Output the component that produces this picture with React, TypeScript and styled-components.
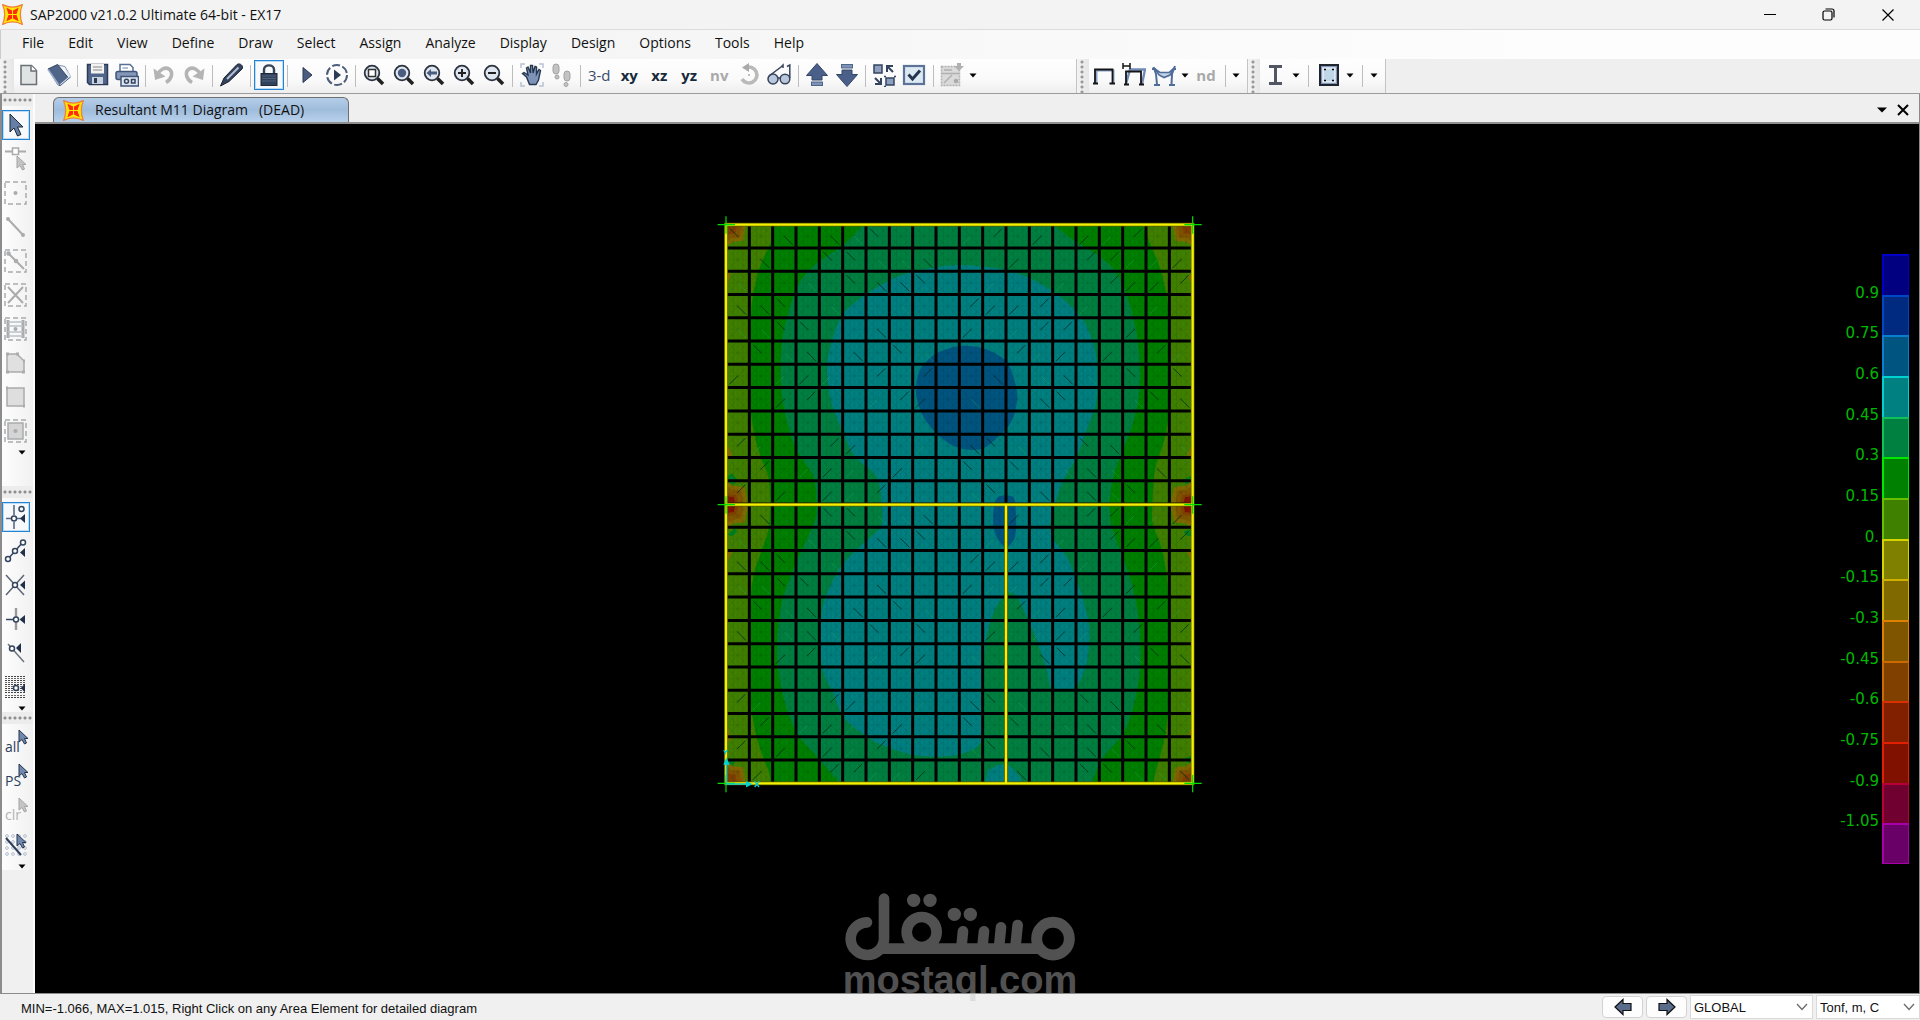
import React from "react";
import styled, { createGlobalStyle, css } from "styled-components";

const ui = '"Open Sans", "Noto Sans", sans-serif';
const arial = '"Liberation Sans", Arial, sans-serif';
const ink = "#33445f";
const line = "#9b9b9b";

const GlobalStyle = createGlobalStyle`
  *, *::before, *::after { box-sizing: border-box; }
  body { margin: 0; background: #f0f0f0; font-family: ${ui}; font-size: 14px; color: #111; }
  button, select { font: inherit; color: inherit; }
  svg { display: block; flex: none; }
`;

const Window = styled.div`
  position: relative;
  display: flex;
  flex-direction: column;
  height: 100vh;
  min-height: 900px;
  overflow: hidden;
`;

/* ---------- title bar ---------- */
const TitleBar = styled.header`
  display: flex;
  align-items: center;
  height: 30px;
  padding: 0 3px 0 2px;
  background: #f3f3f3;
  border-bottom: 1px solid #dcdcdc;
`;
const Title = styled.h1`
  flex: 1;
  margin: 0 0 0 7px;
  font-size: 14px;
  font-weight: 400;
  line-height: 20px;
`;
const WindowButton = styled.button`
  display: grid;
  place-items: center;
  width: 59px;
  height: 28px;
  padding: 0;
  border: 0;
  background: none;
`;

/* ---------- menu ---------- */
const MenuBar = styled.nav`
  display: flex;
  align-items: flex-start;
  height: 29px;
  padding-left: 9px;
  background: linear-gradient(90deg, #f0f0f0, #fdfdfd 80%);
  border-left: 1px solid #ccc;
`;
const MenuItem = styled.button`
  height: 26px;
  padding: 0 12px;
  border: 0;
  background: none;
  line-height: 24px;
`;

/* ---------- top tool bars ---------- */
const ToolRow = styled.div`
  display: flex;
  height: 35px;
  background: #efefef;
  border-bottom: 1px solid ${line};
`;
const Strip = styled.div<{ $w: number }>`
  display: flex;
  width: ${(p) => p.$w}px;
  padding-top: 1px;
  background: linear-gradient(#fefefe, #fafafa 60%, #eeeeee);
  border-right: 1px solid #c4c4c4;
`;
const Grip = styled.span<{ $w?: number }>`
  width: ${(p) => p.$w ?? 12}px;
  margin-top: -1px;
  background: radial-gradient(circle at 5px 3px, #9a9a9a 1px, transparent 2px) 0 0 / 14px 5px,
    linear-gradient(90deg, #f4f4f4, #e6e6e6);
`;
const Tools = styled.div<{ $w: number }>`
  display: flex;
  justify-content: space-between;
  width: ${(p) => p.$w}px;
`;
const Group = styled.div`
  display: flex;
`;
const Divider = styled.span`
  width: 1px;
  height: 22px;
  margin-top: 5px;
  background: #bdbdbd;
`;
const ToolButton = styled.button<{ $on?: boolean; $w?: number }>`
  display: grid;
  place-items: center;
  width: ${(p) => p.$w ?? 30}px;
  height: 30px;
  padding: 0;
  border: 0;
  background: none;
  ${(p) =>
    p.$on &&
    css`
      border: 1px solid #2483d3;
      outline: 1px solid #bcdcf5;
      outline-offset: -2px;
      background: #f7f9fb;
    `}
`;
const TextGlyph = styled.span<{ $tone?: "plain" | "off" | "strong" }>`
  font-size: 15px;
  line-height: 24px;
  font-weight: ${(p) => (p.$tone === "plain" ? 400 : 700)};
  color: ${(p) => (p.$tone === "off" ? "#a9a9a9" : p.$tone === "plain" ? "#3b4c6a" : "#172a3c")};
`;

/* ---------- body ---------- */
const Body = styled.div`
  display: flex;
  flex: 1;
  min-height: 0;
`;
const Side = styled.aside`
  width: 35px;
  border-left: 2px solid #8c8c8c;
  border-right: 2px solid #fcfcfc;
  background: #f0f0f0;
`;
const SideSection = styled.section<{ $h: number }>`
  display: flex;
  flex-direction: column;
  gap: 4px;
  height: ${(p) => p.$h}px;
  background: linear-gradient(90deg, #fdfdfd, #f1f1f1);
`;
const SideGrip = styled.span`
  height: 12px;
  background: radial-gradient(circle at 3px 6px, #8f8f8f 1px, transparent 2px) 0 0 / 5px 12px,
    #ececec;
`;
const SideArrow = styled.button`
  display: grid;
  place-items: center;
  align-self: flex-end;
  width: 22px;
  height: 4px;
  padding: 0;
  border: 0;
  background: none;
`;
const IconBox = styled.span`
  display: grid;
  place-items: center;
`;

const Main = styled.main`
  display: flex;
  flex: 1;
  flex-direction: column;
  min-width: 0;
  border-right: 1px solid #8a8a8a;
`;
const TabRow = styled.div`
  display: flex;
  align-items: flex-end;
  height: 30px;
  padding: 0 6px 0 18px;
  background: #efefef;
  border-bottom: 2px solid #8f8f8f;
`;
const Tab = styled.button`
  display: flex;
  align-items: center;
  gap: 11px;
  width: 296px;
  height: 25px;
  padding: 0 0 0 9px;
  border: 1px solid #6f6f6f;
  border-bottom: 0;
  border-radius: 6px 6px 0 0;
  background: linear-gradient(#b4cde8, #9fbcdc 50%, #b9d2ec);
  white-space: pre;
  line-height: 22px;
`;
const TabControls = styled.div`
  display: flex;
  margin-left: auto;
  height: 25px;
`;
const TabControl = styled.button`
  display: grid;
  place-items: center;
  width: 21px;
  padding: 0;
  border: 0;
  background: none;
`;
const Viewport = styled.div`
  position: relative;
  flex: 1;
  overflow: hidden;
  background: #000;
`;
/* the model floats freely in the drawing space */
const Model = styled.div`
  position: absolute;
  left: calc(50% - 263px);
  top: 88px;
`;
const Legend = styled.ul`
  position: absolute;
  right: 10px;
  top: 130px;
  display: grid;
  grid-auto-rows: 1fr;
  height: 610px;
  margin: 0;
  padding: 0;
  list-style: none;
`;
const LegendRow = styled.li`
  display: grid;
  grid-template-columns: 60px 27px;
  column-gap: 3px;
`;
const LegendLabel = styled.span`
  align-self: end;
  margin-bottom: -8px;
  text-align: right;
  font-family: "DejaVu Sans", sans-serif;
  font-size: 15px;
  line-height: 20px;
  color: #00b800;
`;
const Swatch = styled.span<{ $fill: string; $edge: string }>`
  background: ${(p) => p.$fill};
  border: solid ${(p) => p.$edge};
  border-width: 2px 1px 0 2px;
  li:last-child & { border-bottom-width: 1px; }
`;

/* ---------- status bar ---------- */
const StatusBar = styled.footer`
  display: flex;
  align-items: center;
  gap: 3px;
  height: 27px;
  padding-left: 21px;
  background: #f0f0f0;
  border-top: 1px solid #8c8c8c;
  font-family: ${arial};
  font-size: 13px;
`;
const Message = styled.span`
  flex: 1;
  padding-top: 3px;
`;
const StepButton = styled.button`
  display: grid;
  place-items: center;
  width: 41px;
  height: 22px;
  padding: 0;
  border: 1px solid #d2d2d2;
  border-radius: 4px;
  background: #fdfdfd;
`;
const Picker = styled.label<{ $w: number }>`
  display: grid;
  align-items: center;
  width: ${(p) => p.$w}px;
  height: 24px;
  border: 1px solid #d9d9d9;
  background: #fff;
  > * { grid-area: 1 / 1; }
  > svg { justify-self: end; margin-right: 4px; pointer-events: none; }
`;
const PickerSelect = styled.select`
  width: 100%;
  height: 22px;
  padding: 1px 18px 0 3px;
  border: 0;
  background: none;
  appearance: none;
`;
const Watermark = styled.div`
  position: absolute;
  left: 0;
  right: 0;
  bottom: 19px;
  display: flex;
  flex-direction: column;
  align-items: center;
  opacity: 0.42;
  color: #c1c1c1;
  pointer-events: none;
`;
const WatermarkText = styled.span`
  margin-top: -2px;
  font-family: ${arial};
  font-weight: 700;
  font-size: 38px;
  line-height: 42px;
`;

/* ---------- icons ---------- */
type SvgProps = { size?: number; children: React.ReactNode };
const Ico = ({ size = 24, children }: SvgProps) => (
  <svg width={size} height={size} viewBox="0 0 24 24" fill="none" stroke={ink} strokeWidth="1.5" aria-hidden="true">
    {children}
  </svg>
);

const Star = () => (
  <svg width="21" height="21" viewBox="0 0 20 20" aria-hidden="true">
    <path d="M0.600 0.600Q10 5.500 19.400 0.600Q15.500 10 19.400 19.400Q10 14.500 0.600 19.400Q4.500 10 0.600 0.600Z" fill="#ffe800" stroke="#f0803c" strokeWidth="1.200" />
    <path d="M5 4.500L9 6.500V9H6.500ZM15 4.500L11 6.500V9H13.500ZM5 15.500L9 13.500V11H6.500ZM15 15.500L11 13.500V11H13.500Z" fill="#ff2a10" stroke="#ff2a10" strokeWidth="1" />
  </svg>
);
const Caret = () => (
  <svg width="8" height="5" viewBox="0 0 8 5" aria-hidden="true">
    <path d="M0.500 0.500H7.500L4 4.500Z" fill="#000" />
  </svg>
);
const Chevron = () => (
  <svg width="12" height="8" viewBox="0 0 12 8" fill="none" stroke="#6b6b6b" strokeWidth="1.3" aria-hidden="true">
    <path d="M1 1L6 6.500L11 1" />
  </svg>
);
const Pointer = ({ x = 0, y = 0, off = false }: { x?: number; y?: number; off?: boolean }) => (
  <path
    transform={`translate(${x} ${y})`}
    d="M0 0V12L3 9.500L5.500 14L7.500 13L5.500 8.500H9Z"
    fill={off ? "#c4c4c4" : "#7088ad"}
    stroke={off ? "#a5a5a5" : "#26354d"}
    strokeWidth="1"
  />
);

const Lens = ({ children }: { children: React.ReactNode }) => (
  <Ico>
    <circle cx="10" cy="10" r="7.3" fill="#dfe6ef" stroke="#2b3340" strokeWidth="1.8" />
    <path d="M15.500 15.500L21 21" stroke="#222" strokeWidth="3.6" />
    {children}
  </Ico>
);

const off = "#a9abad";
const icons: Record<string, React.ReactNode> = {
  New: <Ico><path d="M4 2.500H14.500L19.500 7.500V21.500H4Z" fill="#dfe3e3" stroke="#6a6f75" /><path d="M14 2.500V8H19.500" stroke="#6a6f75" fill="#fff" /></Ico>,
  Open: <Ico><path d="M10.500 2L18 3.500L23.500 13.500L13.500 22Z" fill="#f1f4f8" stroke="#8796ae" strokeWidth="1" /><path d="M1 6L10.500 1.500L21 14.500L13 22.500L11 22Z" fill="#50658a" stroke="#34445f" strokeWidth="1" /><path d="M1 6.500L12 22.500" stroke="#a3b4cd" /><path d="M13.500 22L23 14L20 9" stroke="#dfe6ef" strokeWidth="2" /><path d="M13 22.800L23.500 14" stroke="#50658a" strokeWidth="1" /></Ico>,
  Save: <Ico><path d="M2.500 1.500H22.500V21.500H4.500L2.500 19.500Z" fill="#4f658a" stroke="#2c3b55" /><rect x="6" y="1" width="13" height="9.500" fill="#f2f2f2" stroke="none" /><path d="M8 4H17M8 7H17" stroke="#888" strokeWidth="1" /><rect x="7" y="14" width="11" height="7" fill="#c9d3e0" stroke="none" /><rect x="9" y="15" width="3" height="5" fill="#2c3b55" stroke="none" /></Ico>,
  Print: <Ico><path d="M5 9V1.500H15L18 4.500V9" fill="#fff" stroke="#5a6f92" /><path d="M7.500 5H13" stroke="#9aa9c0" /><rect x="1" y="8.500" width="21" height="8" rx="2" fill="#8497b8" stroke="#41557a" /><rect x="6" y="13.500" width="17.500" height="9.500" fill="#dfe6ef" stroke="#41557a" /><circle cx="11.500" cy="18.300" r="2" /><rect x="16.500" y="16.500" width="3.500" height="3.500" /></Ico>,
  Undo: <Ico><path d="M5 12C8 6.500 13 3.500 17 6C21.500 9 20 16 14 19.500" stroke="#b4b4b4" strokeWidth="3.600" /><path d="M1.500 5.500L3 17L13.500 13.500Z" fill="#b4b4b4" stroke="none" /></Ico>,
  Redo: <Ico><path d="M19 12C16 6.500 11 3.500 7 6C2.500 9 4 16 10 19.500" stroke="#b4b4b4" strokeWidth="3.600" /><path d="M22.500 5.500L21 17L10.500 13.500Z" fill="#b4b4b4" stroke="none" /></Ico>,
  Pen: <Ico><path d="M0.500 23L4 15L17 1.500C20 -0.500 24 3 22 6L9 18.500Z" fill="#34435e" stroke="#181f2b" strokeWidth="1" /><path d="M7 16L18.500 4.500" stroke="#b4c0d4" strokeWidth="2" /></Ico>,
  Lock: <Ico><path d="M7 11V6.500C7 1 17 1 17 6.500V11" stroke="#36435a" strokeWidth="2.400" /><rect x="4" y="10.500" width="16" height="12" fill="#33425c" stroke="#1e293b" strokeWidth="1" /><path d="M5 13H19M5 15.500H19M5 18H19" stroke="#50627f" strokeWidth="1" /></Ico>,
  Run: <Ico><path d="M8 4.500L17 12L8 19.500Z" fill="#4a5d80" stroke="#2b3a55" strokeWidth="1" /></Ico>,
  "Run cases": <Ico><circle cx="12" cy="12" r="10" strokeDasharray="8 2.470" stroke="#4d5d78" strokeWidth="2" /><path d="M9 6.500L16 12L9 17.500Z" fill="#2d3c56" stroke="none" /></Ico>,
  "Zoom window": <Lens><rect x="6.500" y="6.500" width="7" height="7" stroke="#333" fill="#fff" /></Lens>,
  "Zoom full": <Lens><circle cx="10" cy="10" r="4.200" fill="#4a5d80" stroke="none" /></Lens>,
  "Zoom back": <Lens><path d="M4.500 10L9 6V8.500H15V11.500H9V14Z" fill="#4a5d80" stroke="none" /></Lens>,
  "Zoom in": <Lens><path d="M6 10H14M10 6V14" stroke="#222" strokeWidth="2" /></Lens>,
  "Zoom out": <Lens><path d="M6 10H14" stroke="#222" strokeWidth="2" /></Lens>,
  Pan: <Ico><path d="M1 5V1H5M19 1H23V5M1 19V23H5M19 23H23V19" stroke="#b5c3d4" /><path d="M6.500 14L2.500 10.500L4 9.500L8 12L6.500 5L8 4L10.500 10V2.500L12.500 2.500L13 10L15 3.500L16.500 4V11L19 6.500L20.500 7.500L18.500 17L16 21.500H9.500Z" fill="#7d93b8" stroke="#273750" strokeWidth="1.400" /></Ico>,
  Walk: <Ico><g fill="#c3c3c3" stroke="#a2a2a2" strokeWidth="1"><rect x="3" y="1" width="6" height="10" rx="3" /><circle cx="7" cy="14" r="2" /><rect x="14" y="8" width="6" height="10" rx="3" /><circle cx="16" cy="21.500" r="2" /></g></Ico>,
  "View 3-d": <TextGlyph $tone="plain">3-d</TextGlyph>,
  "View xy": <TextGlyph>xy</TextGlyph>,
  "View xz": <TextGlyph>xz</TextGlyph>,
  "View yz": <TextGlyph>yz</TextGlyph>,
  "View nv": <TextGlyph $tone="off">nv</TextGlyph>,
  "Named view nd": <TextGlyph $tone="off">nd</TextGlyph>,
  Rotate: <Ico><path d="M9 4.500A8 8 0 1 1 5 16" stroke="#bababa" strokeWidth="3.600" /><path d="M12 0V9L5 4.500Z" fill="#aaa" stroke="none" /><circle cx="12" cy="12" r="1" fill="#aaa" stroke="none" /></Ico>,
  Perspective: <Ico><g stroke="#36435a" strokeWidth="1.500"><circle cx="6" cy="16" r="5" fill="#b9c7dc" /><circle cx="18" cy="16" r="4.800" fill="#b9c7dc" /><path d="M11 15H13M2 13L14 4L16 2V5M22.800 15V2L20 3.500" /></g></Ico>,
  "Move up": <Ico><path d="M12 0.500L22.500 12.500H17V17H7V12.500H1.500Z" fill="#4a6088" stroke="#33466a" strokeWidth="1" /><rect x="6.500" y="19" width="11" height="3.500" fill="#7f93b6" stroke="#4f658a" strokeWidth="1" /></Ico>,
  "Move down": <Ico><path d="M12 23.500L22.500 11.500H17V7H7V11.500H1.500Z" fill="#4a6088" stroke="#33466a" strokeWidth="1" /><rect x="6.500" y="1.500" width="11" height="3.500" fill="#7f93b6" stroke="#4f658a" strokeWidth="1" /></Ico>,
  "Object shrink": <Ico><rect x="2" y="2" width="8" height="8" fill="#8da0c0" /><rect x="14" y="15" width="8" height="7" fill="#8da0c0" /><path d="M15 9V3H21M15 3L21 9M3 15L9 21M9 15V21H3" strokeWidth="2" /><path d="M12 13.500H14M12 23.500H14M22 13.500H24" /></Ico>,
  "Display options": <Ico><rect x="2" y="3" width="20" height="18" fill="#dce9f3" stroke="#5c7397" strokeWidth="2.200" /><path d="M6.500 11.500L10.500 16L18 7.500" stroke="#26354d" strokeWidth="3" /></Ico>,
  Assign: <Ico><rect x="1.500" y="3.500" width="18" height="19" fill="#dadada" stroke="#b0b0b0" strokeDasharray="2 1" /><path d="M4 7H12M4 20L12 12M1.500 10.500H19" stroke="#b0b0b0" /><circle cx="16" cy="18" r="1.500" fill="#aaa" stroke="#aaa" /><path d="M17 0H21V3H24L19 8L14 3H17Z" fill="#b0b0b0" stroke="none" /></Ico>,
  "Undeformed shape": <Ico><path d="M4.500 20.500V7.500H21.500V20.500" stroke="#8ba3c8" strokeWidth="2" /><path d="M3 20V6.500H20.500V20M1 20.500H6M17.500 20.500H23" stroke="#151515" strokeWidth="1.800" /></Ico>,
  "Show forces": <Ico><path d="M4 21L8 6.500H23L20 21" stroke="#6f8bb8" strokeWidth="2.400" /><path d="M4 21V8.500H19V21M2 21.500H7M17 21.500H22" stroke="#151515" strokeWidth="1.800" /><path d="M1 0V6M8 0V6M1 3H8" stroke="#151515" /></Ico>,
  "Deformed shape": <Ico><path d="M3 6L8 9.500H17L22 5L18 12L12 14.500L7 12Z" fill="#c3d3e6" stroke="#4f6c9a" strokeWidth="1.600" /><path d="M5 21.500L4 11L1.500 4M19.500 21.500L20 11L23 3M2 22H8M17 22H23M0 6H4M21 6H24" stroke="#4f6c9a" strokeWidth="2" /></Ico>,
  Section: <Ico><path d="M6 3.500H19M6 20.500H19M12.500 3V21" stroke="#505762" strokeWidth="3" /></Ico>,
  "Area section": <Ico><rect x="3" y="2" width="18" height="20" fill="#8297ba" stroke="#20242c" strokeWidth="2" /><rect x="6" y="5" width="12" height="14" fill="#c0d7ea" stroke="#e9f2f8" /><path d="M7 6.500H9M15 6.500H17M7 17.500H9M15 17.500H17" stroke="#000" /></Ico>,

  Select: <Ico><path d="M6 1V19L10 15L13.500 23L17 21.500L13.500 14H19Z" fill="#667fa6" stroke="#1c2738" strokeWidth="1" /></Ico>,
  Reshape: <Ico><path d="M1 4.500H22" stroke={off} strokeWidth="2" /><rect x="8.500" y="1" width="6" height="6.500" fill="#fff" stroke={off} /><Pointer x={13} y={9} off /></Ico>,
  Joint: <Ico><rect x="1" y="1" width="21" height="22" stroke={off} strokeDasharray="5 3" /><circle cx="11.500" cy="12" r="2" fill={off} stroke="none" /></Ico>,
  Frame: <Ico><path d="M4 4L19 20" stroke={off} strokeWidth="2" /><circle cx="4" cy="4" r="2" fill={off} stroke="none" /><circle cx="19" cy="20" r="2" fill={off} stroke="none" /></Ico>,
  "Quick frame": <Ico><rect x="1" y="1" width="21" height="22" stroke={off} strokeDasharray="5 3" /><path d="M4 4L20 20" stroke={off} strokeWidth="2" /><circle cx="4.500" cy="4.500" r="1.500" stroke={off} /><circle cx="12" cy="12" r="1.500" stroke={off} /></Ico>,
  Braces: <Ico><rect x="1" y="1" width="21" height="22" stroke={off} strokeDasharray="5 3" /><path d="M4 4L19 20M19 4L4 20" stroke={off} strokeWidth="2" /></Ico>,
  "Secondary beams": <Ico><rect x="1" y="1" width="21" height="22" stroke={off} strokeDasharray="5 3" /><path d="M4 3V21M19 3V21" stroke={off} strokeWidth="3" /><path d="M4 5H19M4 9H19M4 15H19M4 19H19" stroke="#b9c1c9" /><circle cx="11.500" cy="12" r="2" fill={off} stroke="none" /></Ico>,
  "Poly area": <Ico><path d="M3 3H13L20 10V21H3Z" fill="#e0e0e0" stroke={off} /><path d="M2 3H5M12 3H15M19 10H21M2 21H5M18 21H21" stroke={off} strokeWidth="3" /></Ico>,
  "Rectangular area": <Ico><rect x="3" y="3" width="17" height="18" fill="#dedede" stroke={off} /><path d="M2 3H4M19 21H21" stroke={off} strokeWidth="3" /></Ico>,
  "Quick area": <Ico><rect x="1" y="1" width="21" height="22" stroke={off} strokeDasharray="5 3" /><rect x="4" y="4" width="15" height="16" fill="#d5d5d5" stroke={off} /><circle cx="11.500" cy="12" r="2" fill={off} stroke="none" /></Ico>,

  "Snap to points": <Ico><path d="M10 0V10M10 17V24M2 13.500H7M13 13.500H17" stroke="#5a6a84" strokeWidth="1.600" /><circle cx="10" cy="13.500" r="2.500" fill="#fff" /><circle cx="17.500" cy="4" r="2.500" /><path d="M21 9V18L16 13.500Z" fill="#22314b" stroke="none" /></Ico>,
  "Snap to midpoints": <Ico><path d="M4 20L19 3" /><circle cx="4" cy="20" r="2.500" fill="#fff" /><circle cx="11" cy="12" r="2.500" fill="#fff" /><circle cx="19" cy="3.500" r="2.500" fill="#fff" /><path d="M21 9V18L16 13.500Z" fill="#22314b" stroke="none" /></Ico>,
  "Snap to intersections": <Ico><path d="M2 2L20 22M20 2L2 22" stroke="#5a6575" /><circle cx="11" cy="12" r="2.500" fill="#fff" /><path d="M21 7.500V16.500L16 12Z" fill="#22314b" stroke="none" /></Ico>,
  "Snap perpendicular": <Ico><path d="M12 1V23" stroke="#9a9a9a" strokeWidth="2.400" /><path d="M2 12.500H10" /><circle cx="12" cy="12.500" r="2.500" fill="#fff" /><path d="M21 8V17L15.500 12.500Z" fill="#22314b" stroke="none" /></Ico>,
  "Snap to lines": <Ico><path d="M4 3L20 21" stroke="#6b7480" /><circle cx="8" cy="7.500" r="2.500" fill="#fff" /><path d="M17 2V12L12 7Z" fill="#22314b" stroke="none" /></Ico>,
  "Snap to grid": <Ico><path d="M1 1.500H22M1 5.500H22M1 9.500H22M1 13.500H22M1 17.500H22M1 22.500H22" stroke="#444" strokeWidth="1" strokeDasharray="2 1" /><path d="M1 3.500H22M1 7.500H22M1 11.500H22M1 15.500H22M1 20.500H22" stroke="#666" strokeWidth="1" strokeDasharray="2 1" /><circle cx="12" cy="13" r="2.500" fill="#fff" /><path d="M21 8.500V17.500L17 13Z" fill="#22314b" stroke="none" /></Ico>,
};

const SideText = ({ label, gray }: { label: string; gray?: boolean }) => (
  <svg width="28" height="28" viewBox="0 0 28 28" aria-hidden="true">
    <text x="3" y="23" fontFamily={ui} fontSize="14" fill={gray ? "#b3b3b3" : "#2d3d5a"}>{label}</text>
    <Pointer x={17} y={1} off={gray} />
  </svg>
);
icons["Select all"] = <SideText label="all" />;
icons["Previous selection"] = <SideText label="PS" />;
icons["Clear selection"] = <SideText label="clr" gray />;
icons["Intersecting line select"] = (
  <Ico>
    {[3, 9, 15, 21].map((y) => [3, 9, 15, 21].map((x) => <circle key={`${x}-${y}`} cx={x} cy={y} r="1.4" stroke="#b4c0d0" strokeWidth="1" />))}
    <path d="M2 5L17 22" stroke="#2d3d5a" strokeWidth="2" />
    <Pointer x={13} y={1} />
  </Ico>
);

/* ---------- tool bar data ---------- */
const menus = ["File", "Edit", "View", "Define", "Draw", "Select", "Assign", "Analyze", "Display", "Design", "Options", "Tools", "Help"];
const mainGroups = [
  ["New", "Open"], ["Save", "Print"], ["Undo", "Redo"], ["Pen"], ["Lock"], ["Run", "Run cases"],
  ["Zoom window", "Zoom full", "Zoom back", "Zoom in", "Zoom out"], ["Pan", "Walk"],
  ["View 3-d", "View xy", "View xz", "View yz", "View nv", "Rotate", "Perspective"],
  ["Move up", "Move down"], ["Object shrink", "Display options"], ["Assign"],
];
const drawTools = ["Reshape", "Joint", "Frame", "Quick frame", "Braces", "Secondary beams", "Poly area", "Rectangular area", "Quick area"];
const snapTools = ["Snap to midpoints", "Snap to intersections", "Snap perpendicular", "Snap to lines", "Snap to grid"];
const selectTools = ["Select all", "Previous selection", "Clear selection", "Intersecting line select"];

const Tool = ({ name, on, w }: { name: string; on?: boolean; w?: number }) => (
  <ToolButton $on={on} $w={w} aria-label={name}><IconBox>{icons[name]}</IconBox></ToolButton>
);
const SideTool = ({ name, on }: { name: string; on?: boolean }) => <Tool name={name} on={on} w={28} />;
const More = () => <ToolButton $w={12} aria-label="More"><Caret /></ToolButton>;

/* ---------- contour model ---------- */
const smooth = (pts: number[][], close: boolean) => {
  const n = pts.length;
  const at = (i: number) => (close ? pts[(i + n) % n] : pts[Math.max(0, Math.min(n - 1, i))]);
  let d = `M${pts[0][0]} ${pts[0][1]}`;
  for (let i = 0; i < (close ? n : n - 1); i++) {
    const [a, b, c, e] = [at(i - 1), at(i), at(i + 1), at(i + 2)];
    d += `C${b[0] + (c[0] - a[0]) / 7} ${b[1] + (c[1] - a[1]) / 7} ${c[0] - (e[0] - b[0]) / 7} ${c[1] - (e[1] - b[1]) / 7} ${c[0]} ${c[1]}`;
  }
  return close ? d + "Z" : d;
};
const band = (left: number[][], right: number[][]) =>
  smooth(left, false) + smooth([...right].reverse(), false).replace("M", "L") + "Z";

const greenBand = band(
  [[222, 44], [215, 90], [180, 170], [160, 250], [152, 330], [150, 480], [152, 600], [165, 680], [185, 750], [205, 800], [210, 884], [205, 960], [185, 1020], [160, 1100], [150, 1200], [150, 1450], [165, 1560], [185, 1630], [205, 1680], [212, 1720]],
  [[1328, 44], [1350, 100], [1375, 160], [1395, 230], [1405, 300], [1407, 480], [1405, 620], [1390, 700], [1365, 780], [1357, 884], [1358, 940], [1380, 1000], [1398, 1080], [1405, 1180], [1407, 1450], [1398, 1560], [1380, 1640], [1368, 1680], [1360, 1720]],
);
const seaBand = band(
  [[490, 44], [430, 105], [350, 160], [300, 215], [270, 290], [248, 380], [242, 480], [248, 570], [265, 650], [290, 720], [340, 800], [350, 884], [345, 930], [310, 1010], [275, 1090], [245, 1180], [232, 1290], [235, 1380], [255, 1480], [290, 1570], [350, 1640], [420, 1720]],
  [[1062, 44], [1120, 90], [1200, 140], [1250, 190], [1285, 270], [1310, 370], [1320, 480], [1315, 570], [1295, 650], [1265, 730], [1240, 800], [1228, 884], [1235, 950], [1260, 1020], [1295, 1120], [1315, 1220], [1322, 1310], [1318, 1400], [1300, 1490], [1270, 1570], [1205, 1650], [1175, 1720]],
);
const tealZone = smooth([[770, 165], [690, 175], [620, 190], [560, 215], [495, 255], [430, 310], [400, 380], [383, 450], [383, 510], [395, 580], [430, 670], [465, 740], [530, 800], [545, 884], [542, 950], [490, 1000], [430, 1060], [395, 1120], [368, 1190], [362, 1290], [368, 1380], [400, 1450], [430, 1520], [500, 1580], [560, 1610], [640, 1635], [720, 1640], [790, 1630], [845, 1590], [850, 1440], [855, 1310], [880, 1210], [920, 1150], [950, 1160], [980, 1220], [1010, 1290], [1040, 1380], [1055, 1437], [1100, 1438], [1130, 1430], [1160, 1360], [1168, 1260], [1155, 1190], [1130, 1110], [1100, 1040], [1062, 990], [1050, 945], [1065, 884], [1078, 840], [1095, 800], [1130, 740], [1160, 660], [1188, 580], [1192, 500], [1185, 420], [1160, 350], [1125, 300], [1060, 245], [990, 205], [920, 180], [850, 170]], true);
const blueZone = smooth([[780, 408], [850, 415], [915, 450], [940, 500], [952, 560], [940, 620], [915, 660], [850, 715], [780, 715], [720, 680], [670, 620], [648, 550], [660, 480], [710, 430]], true);
const blueSpot = smooth([[895, 860], [940, 862], [948, 920], [945, 980], [920, 1012], [895, 990], [880, 950], [882, 890]], true);

const L = 78, T = 44, R = 1478, B = 1720, MID = 884, WALL = 918;
const CW = 70, CH = (B - T) / 24;
const range = (n: number) => Array.from({ length: n }, (_, i) => i);

const marks = range(24).flatMap((r) =>
  range(20).map((c) => {
    const h = (r * 37 + c * 61 + r * c * 13) % 11;
    const x = L + c * CW, y = T + r * CH;
    const mirrored = c >= 10;
    const up = r % 12 >= 6;
    const flip = mirrored !== up;
    const s = h % 3 === 0 ? 12 : 34, e = h % 3 === 0 ? 36 : 60;
    const d = flip ? `M${x + CW - s} ${y + s}L${x + CW - e} ${y + e}` : `M${x + s} ${y + s}L${x + e} ${y + e}`;
    return { d, h };
  }),
);
const dark = marks.filter((m) => m.h < 4).map((m) => m.d).join("");
const lit = marks.filter((m) => m.h === 5 || m.h === 8).map((m) => m.d).join("");
const gridPath =
  range(19).map((i) => `M${L + (i + 1) * CW} ${T}V${B}`).join("") +
  range(23).map((i) => `M${L} ${T + (i + 1) * CH}H${R}`).join("");
const framePath = `M${L} ${T}H${R}V${B}H${L}ZM${L} ${MID}H${R}M${WALL} ${MID}V${B}`;

const Hot = ({ x, y, dx, dy, s, red }: { x: number; y: number; dx: number; dy: number; s: number; red?: boolean }) => {
  const q = (k: number) => `M${x} ${y}H${x + dx * k}L${x + dx * k * 0.85} ${y + dy * k * 0.8}L${x + dx * k * 0.35} ${y + dy * k * 0.85}L${x} ${y + dy * k * 1.1}Z`;
  return (
    <>
      <path d={q(s)} fill="#806a00" />
      <path d={q(s * 0.8)} fill="#805500" />
      <path d={q(s * 0.55)} fill="#804000" />
      {red && <path d={q(s * 0.42)} fill="#801500" />}
    </>
  );
};

const SlabModel = () => (
  <svg width="492" height="585" viewBox="42 6 1476 1755" role="img" aria-label="Resultant M11 contours">
    <defs>
      <pattern id="mesh" x={L} y={T} width={CW} height={CH} patternUnits="userSpaceOnUse">
        <path d="M0 0L70 70M70 0L0 70M35 0V70M0 35H70M35 0L0 35L35 70L70 35ZM22 0V70M50 0V70" stroke="#000" strokeWidth="2" opacity=".12" fill="none" />
      </pattern>
    </defs>
    <rect x={L} y={T} width={R - L} height={B - T} fill="#408000" />
    <path d={greenBand} fill="#008000" />
    <path d={seaBand} fill="#008040" />
    <path d={tealZone} fill="#008080" />
    <path d="M855 1720L865 1680L900 1663L930 1668L955 1695L970 1720Z" fill="#008080" />
    <path d={blueZone} fill="#005580" />
    <path d={blueSpot} fill="#005580" />
    <path d="M80 800L95 790L112 808L105 820L80 835ZM80 975L105 955L112 965L95 980L80 972ZM1476 795L1445 812L1460 822L1476 830ZM1476 955L1450 965L1462 978H1476ZM80 1640L105 1652L100 1664L80 1670ZM1476 1636L1450 1648L1476 1665Z" fill="#008020" />
    <path d="M80 175L92 190L80 235ZM80 700L98 735L80 745ZM1476 185L1464 200L1476 225ZM1476 705L1460 735L1476 745ZM80 1012L98 1022L80 1062ZM1476 1012L1460 1022L1476 1060ZM80 1540L94 1590L80 1595ZM1476 1545L1464 1580L1476 1590Z" fill="#806a00" />
    <Hot x={L} y={T} dx={1} dy={1} s={60} />
    <Hot x={R} y={T} dx={-1} dy={1} s={60} />
    <Hot x={L} y={B} dx={1} dy={-1} s={60} />
    <Hot x={R} y={B} dx={-1} dy={-1} s={60} />
    {[1, -1].map((dy) => (
      <React.Fragment key={dy}>
        <Hot x={L} y={MID} dx={1} dy={dy} s={66} red />
        <Hot x={R} y={MID} dx={-1} dy={dy} s={66} red />
      </React.Fragment>
    ))}
    <rect x={L} y={T} width={R - L} height={B - T} fill="url(#mesh)" />
    <path d={dark} stroke="#002a20" strokeWidth="3" opacity=".75" />
    <path d={lit} stroke="#20c070" strokeWidth="2.5" opacity=".45" />
    <path d={gridPath} stroke="#000" strokeWidth="9" />
    <path d={framePath} stroke="#5c5c00" strokeWidth="11" fill="none" />
    <path d={framePath} stroke="#f4f000" strokeWidth="7" fill="none" />
    <path
      d={[L, R].flatMap((x) => [T, MID, B].map((y) => `M${x - 25} ${y}H${x + 27}M${x} ${y - 25}V${y + 27}`)).join("")}
      stroke="#00e000"
      strokeWidth="3.5"
    />
    <g stroke="#00d0d8" strokeWidth="4" fill="none">
      <path d="M79 1720V1648M73 1662L79 1648L86 1662ZM79 1722H152M140 1716L153 1722L140 1729ZM164 1714L177 1731M177 1714L164 1731M71 1621L76 1627L82 1621M76 1627V1633" />
    </g>
  </svg>
);

const legend: [string, string, string][] = [
  ["0.9", "#000080", "#0000c8"], ["0.75", "#002a80", "#0046c8"], ["0.6", "#005580", "#0a7fd0"], ["0.45", "#008080", "#00d0d0"],
  ["0.3", "#008040", "#10c058"], ["0.15", "#008000", "#00e800"], ["0.", "#408000", "#66c000"], ["-0.15", "#808000", "#d4d400"],
  ["-0.3", "#806a00", "#d0b000"], ["-0.45", "#805500", "#e08000"], ["-0.6", "#804000", "#cc6a00"], ["-0.75", "#802000", "#d83000"],
  ["-0.9", "#801000", "#e02000"], ["-1.05", "#70002f", "#b80038"], ["", "#680068", "#a800a8"],
];

const LogoMark = () => (
  <svg width="230" height="68" viewBox="75 41 690 204" fill="none" stroke="currentColor" strokeWidth="32" strokeLinecap="round" role="img" aria-label="مستقل">
    <path d="M141 129A50 49 0 1 0 192 180V58M192 208H655M429 156L424 205M492 156L487 205M543 144L537 205M593 137L586 205" />
    <circle cx="305" cy="158" r="45" />
    <circle cx="699" cy="178" r="49" strokeWidth="33" />
    <g fill="currentColor" stroke="none">
      <circle cx="281" cy="63" r="20" /><circle cx="330" cy="63" r="20" />
      <circle cx="403" cy="105" r="20" /><circle cx="451" cy="105" r="20" />
    </g>
  </svg>
);
const StepArrow = ({ flip }: { flip?: boolean }) => (
  <svg width="18" height="18" viewBox="0 0 18 18" aria-hidden="true">
    <path transform={flip ? "translate(18 0) scale(-1 1)" : undefined} d="M1 9L9 1.500V5.500H17V12.500H9V16.500Z" fill="#5a6c8c" stroke="#111" strokeWidth="1.200" />
  </svg>
);

export default function App() {
  return (
    <Window>
      <GlobalStyle />
      <TitleBar>
        <Star />
        <Title>SAP2000 v21.0.2 Ultimate 64-bit - EX17</Title>
        <WindowButton aria-label="Minimize"><svg width="12" height="12"><path d="M0 5.500H12" stroke="#000" /></svg></WindowButton>
        <WindowButton aria-label="Restore">
          <svg width="13" height="13" fill="none" stroke="#000" strokeWidth="1.200"><rect x="1" y="3" width="9" height="9" rx="1.500" /><path d="M3.500 1H10Q12 1 12 3V9.500" /></svg>
        </WindowButton>
        <WindowButton aria-label="Close"><svg width="12" height="12"><path d="M0.500 0.500L11.500 11.500M11.500 0.500L0.500 11.500" stroke="#000" strokeWidth="1.200" /></svg></WindowButton>
      </TitleBar>
      <MenuBar>{menus.map((m) => <MenuItem key={m}>{m}</MenuItem>)}</MenuBar>
      <ToolRow>
        <Strip $w={1077}>
          <Grip $w={14} />
          <Tools $w={965}>
            {mainGroups.map((g, i) => (
              <React.Fragment key={g[0]}>
                {i > 0 && <Divider />}
                <Group>
                  {g.map((n) => <Tool key={n} name={n} on={n === "Lock"} />)}
                  {i === mainGroups.length - 1 && <More />}
                </Group>
              </React.Fragment>
            ))}
          </Tools>
        </Strip>
        <Strip $w={171}>
          <Grip />
          <Tools $w={153}>
            <Group><Tool name="Undeformed shape" /><Tool name="Show forces" /><Tool name="Deformed shape" /><More /><Tool name="Named view nd" /></Group>
            <Divider />
            <More />
          </Tools>
        </Strip>
        <Strip $w={138}>
          <Grip />
          <Tools $w={120}>
            <Group><Tool name="Section" /><More /></Group>
            <Divider />
            <Group><Tool name="Area section" /><More /></Group>
            <Divider />
            <More />
          </Tools>
        </Strip>
      </ToolRow>
      <Body>
        <Side>
          <SideSection $h={392}>
            <SideGrip />
            <SideTool name="Select" on />
            {drawTools.map((n) => <SideTool key={n} name={n} />)}
            <SideArrow aria-label="More draw tools"><Caret /></SideArrow>
          </SideSection>
          <SideSection $h={226}>
            <SideGrip />
            <SideTool name="Snap to points" on />
            {snapTools.map((n) => <SideTool key={n} name={n} />)}
            <SideArrow aria-label="More snap tools"><Caret /></SideArrow>
          </SideSection>
          <SideSection $h={158}>
            <SideGrip />
            {selectTools.map((n) => <SideTool key={n} name={n} />)}
            <SideArrow aria-label="More selection tools"><Caret /></SideArrow>
          </SideSection>
        </Side>
        <Main>
          <TabRow>
            <Tab><Star />{"Resultant M11 Diagram   (DEAD)"}</Tab>
            <TabControls>
              <TabControl aria-label="Window list"><svg width="10" height="6"><path d="M0 0.500H10L5 5.500Z" fill="#000" /></svg></TabControl>
              <TabControl aria-label="Close window"><svg width="12" height="12"><path d="M1 1L11 11M11 1L1 11" stroke="#000" strokeWidth="2" /></svg></TabControl>
            </TabControls>
          </TabRow>
          <Viewport>
            <Model><SlabModel /></Model>
            <Legend>
              {legend.map(([label, fill, edge]) => (
                <LegendRow key={fill}>
                  <LegendLabel>{label}</LegendLabel>
                  <Swatch $fill={fill} $edge={edge} />
                </LegendRow>
              ))}
            </Legend>
          </Viewport>
        </Main>
      </Body>
      <StatusBar>
        <Message>MIN=-1.066, MAX=1.015, Right Click on any Area Element for detailed diagram</Message>
        <StepButton aria-label="Previous"><StepArrow /></StepButton>
        <StepButton aria-label="Next"><StepArrow flip /></StepButton>
        <Picker $w={123}>
          <PickerSelect aria-label="Coordinate system"><option>GLOBAL</option></PickerSelect>
          <Chevron />
        </Picker>
        <Picker $w={104}>
          <PickerSelect aria-label="Units"><option>Tonf, m, C</option></PickerSelect>
          <Chevron />
        </Picker>
      </StatusBar>
      <Watermark>
        <LogoMark />
        <WatermarkText>mostaql.com</WatermarkText>
      </Watermark>
    </Window>
  );
}
